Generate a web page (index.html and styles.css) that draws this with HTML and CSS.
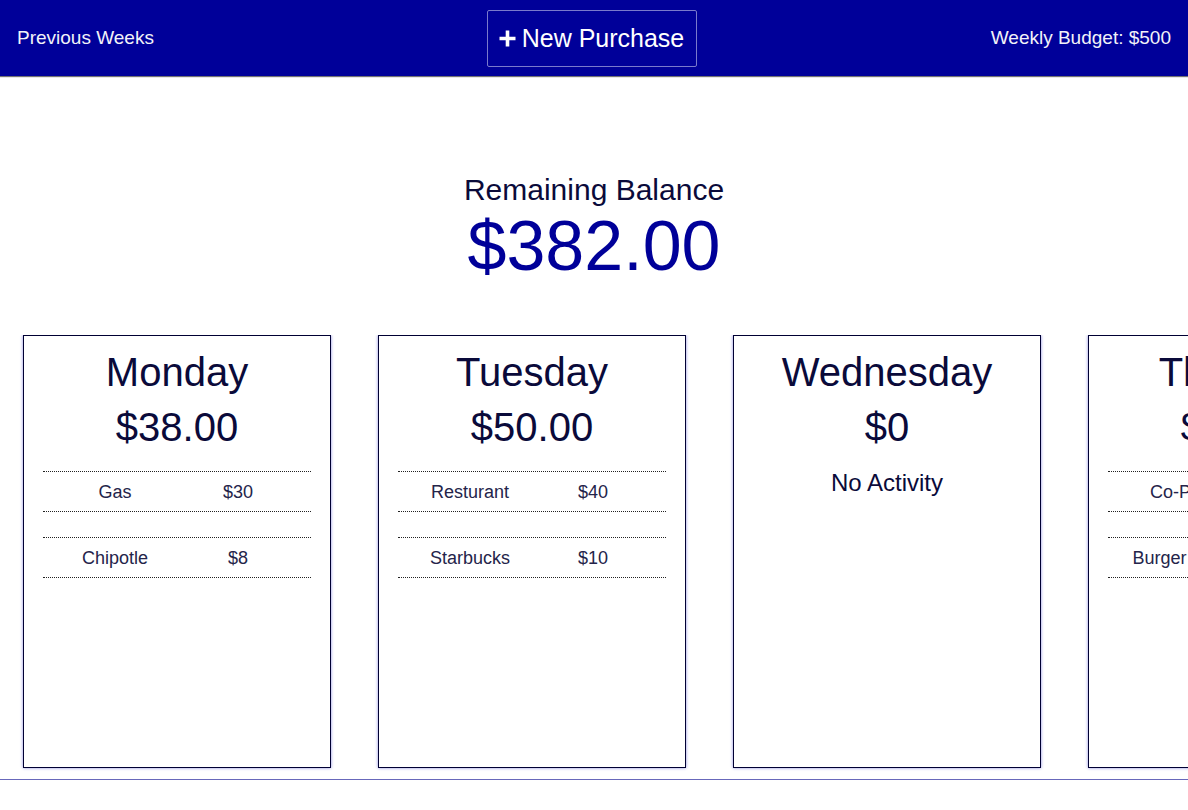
FILE: index.html
```html
<!DOCTYPE html>
<html lang="en">
<head>
<meta charset="utf-8">
<title>Weekly Budget</title>
<link rel="stylesheet" href="styles.css">
</head>
<body>
<header class="topbar">
  <a class="nav-link" href="#">Previous Weeks</a>
  <button class="new-btn" type="button">
    <svg class="plus" viewBox="0 0 17 17" width="17" height="17" aria-hidden="true"><path d="M8.5 0.5v16M0.5 8.5h16" stroke="#fff" stroke-width="3.6" fill="none"/></svg>
    <span>New Purchase</span>
  </button>
  <span class="budget">Weekly Budget: $500</span>
</header>
<main class="main">
  <section class="balance">
    <div class="balance-label">Remaining Balance</div>
    <div class="balance-amount">$382.00</div>
  </section>
  <section class="days">
    <article class="day">
      <h2 class="day-name">Monday</h2>
      <div class="day-total">$38.00</div>
      <ul class="items">
        <li class="item"><span>Gas</span><span>$30</span></li>
        <li class="item"><span>Chipotle</span><span>$8</span></li>
      </ul>
    </article>
    <article class="day">
      <h2 class="day-name">Tuesday</h2>
      <div class="day-total">$50.00</div>
      <ul class="items">
        <li class="item"><span>Resturant</span><span>$40</span></li>
        <li class="item"><span>Starbucks</span><span>$10</span></li>
      </ul>
    </article>
    <article class="day">
      <h2 class="day-name">Wednesday</h2>
      <div class="day-total">$0</div>
      <p class="empty">No Activity</p>
    </article>
    <article class="day">
      <h2 class="day-name">Thursday</h2>
      <div class="day-total">$30.00</div>
      <ul class="items">
        <li class="item"><span>Co-Pay</span><span>$20</span></li>
        <li class="item"><span>Burger King</span><span>$10</span></li>
      </ul>
    </article>
    <article class="day">
      <h2 class="day-name">Friday</h2>
      <div class="day-total">$0</div>
      <p class="empty">No Activity</p>
    </article>
    <article class="day">
      <h2 class="day-name">Saturday</h2>
      <div class="day-total">$0</div>
      <p class="empty">No Activity</p>
    </article>
    <article class="day">
      <h2 class="day-name">Sunday</h2>
      <div class="day-total">$0</div>
      <p class="empty">No Activity</p>
    </article>
  </section>
</main>
</body>
</html>
```
FILE: styles.css
```css
* { box-sizing: border-box; }
html, body { margin: 0; padding: 0; }
body {
  font-family: "Liberation Sans", Arial, sans-serif;
  background: #fff;
  color: #0a0a3a;
  overflow: hidden;
}
.topbar {
  height: 76px;
  background: #000099;
  display: grid;
  grid-template-columns: 1fr auto 1fr;
  align-items: center;
  padding: 0 17px;
  box-shadow: 0 1px 1px rgba(0,0,0,0.55);
  position: relative;
  z-index: 1;
}
.nav-link {
  justify-self: start;
  color: #f2f2f8;
  font-size: 19px;
  text-decoration: none;
}
.budget {
  justify-self: end;
  color: #f2f2f8;
  font-size: 19px;
}
.new-btn {
  height: 57px;
  display: flex;
  align-items: center;
  gap: 6px;
  padding: 0 12px 0 11px;
  background: #000099;
  border: 1px solid #7a7acc;
  border-radius: 2px;
  color: #fff;
  font-family: inherit;
  font-size: 25px;
  position: relative;
  left: -2px;
}
.plus { display: block; }
.main {
  padding-top: 97px;
}
.balance {
  text-align: center;
}
.balance-label {
  font-size: 30px;
  line-height: 34px;
  color: #0a0a3a;
}
.balance-amount {
  font-size: 70px;
  line-height: 74px;
  padding-top: 2px;
  color: #000099;
}
.days {
  margin-top: 52px;
  display: flex;
  gap: 47px;
  padding: 0 23px 11px;
  border-bottom: 1px solid #6868bb;
  overflow: hidden;
}
.day {
  flex: 0 0 308px;
  height: 433px;
  border: 1px solid #000033;
  box-shadow: 0 0 3px #8a8ae0;
  padding: 13px 19px 0;
  text-align: center;
}
.day-name {
  margin: 0;
  font-size: 40px;
  font-weight: normal;
  line-height: 46px;
  color: #0a0a3a;
}
.day-total {
  margin-top: 9px;
  font-size: 40px;
  line-height: 46px;
  color: #0a0a3a;
}
.items {
  list-style: none;
  margin: 21px 0 0;
  padding: 0;
  display: flex;
  flex-direction: column;
  gap: 25px;
}
.item {
  display: grid;
  grid-template-columns: 144px 102px;
  align-items: center;
  height: 41px;
  padding-top: 2px;
  border-top: 1px dotted #222;
  border-bottom: 1px dotted #222;
  font-size: 18px;
  color: #24244a;
}
.item span { text-align: center; }
.empty {
  margin: 19px 0 0;
  font-size: 24px;
  line-height: 28px;
  color: #0a0a3a;
}
```
